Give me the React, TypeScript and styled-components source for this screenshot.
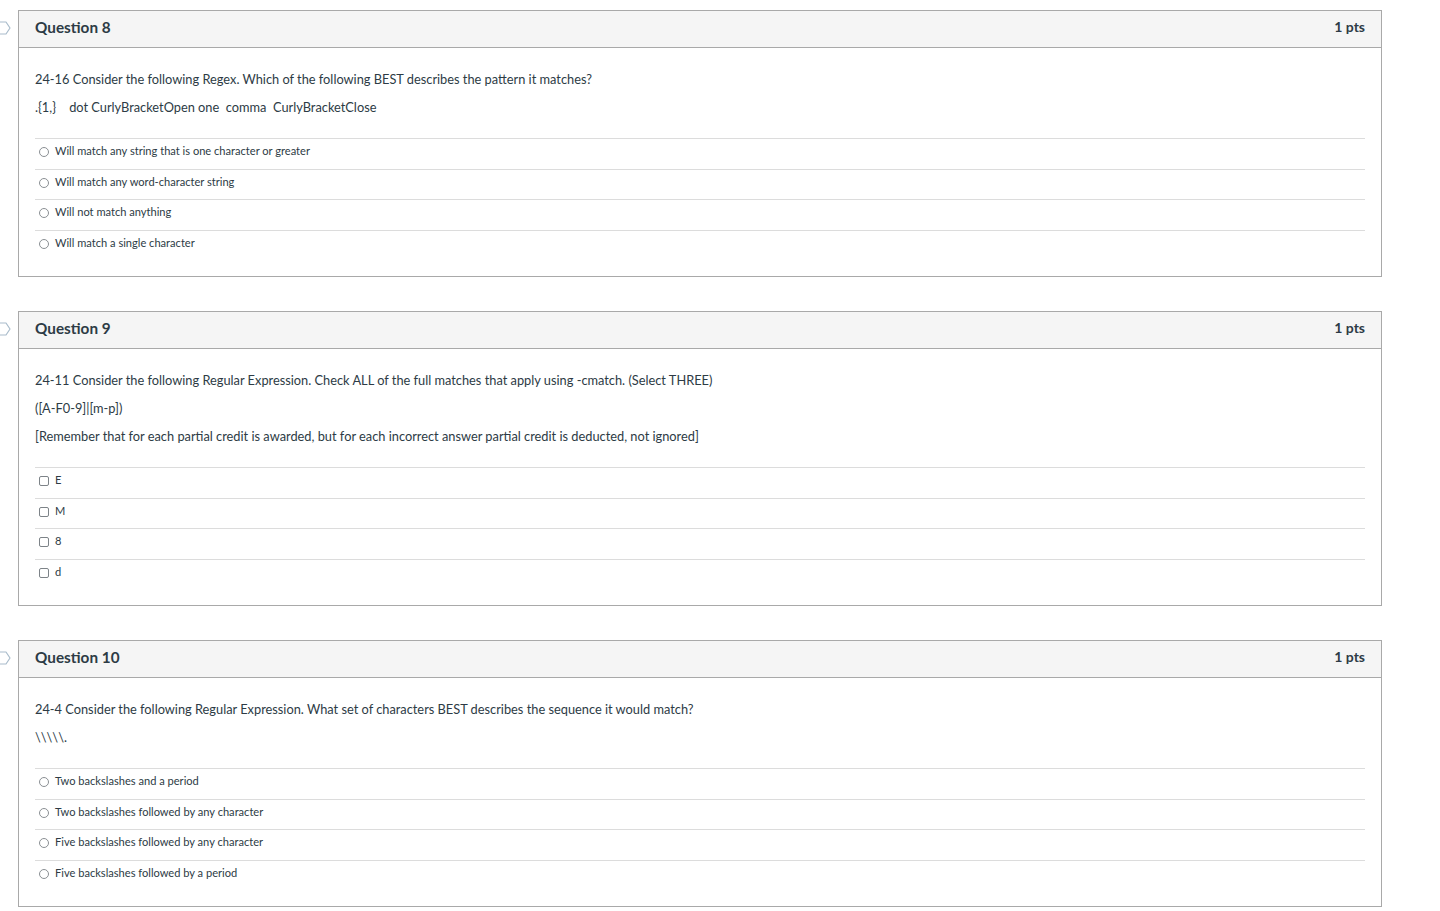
import React from 'react';
import styled, { createGlobalStyle } from 'styled-components';

const GlobalStyle = createGlobalStyle`
  body {
    margin: 0;
    background: #ffffff;
    font-family: Lato, "Open Sans", Arial, sans-serif;
    color: #2d3b45;
  }
`;

const Page = styled.div`
  padding-top: 10px;
  display: flex;
  flex-direction: column;
  gap: 34px;
  width: 1440px;
`;

const QuestionRow = styled.div`
  display: flex;
  align-items: flex-start;
`;

const FlagColumn = styled.div`
  width: 18px;
  padding-top: 11px;
  display: flex;
`;

const QuestionBox = styled.div`
  width: 1364px;
  box-sizing: border-box;
  border: 1px solid #a9a9a9;
  background: #fff;
`;

const Header = styled.div`
  height: 37px;
  box-sizing: border-box;
  background: #f5f5f5;
  border-bottom: 1px solid #a9a9a9;
  display: flex;
  align-items: center;
  justify-content: space-between;
  padding: 0 16px 5px;
`;

const Title = styled.div`
  font-size: 15.3px;
  line-height: 18px;
  font-weight: 700;
  color: #2d3b45;
`;

const Points = styled.div`
  font-size: 14px;
  line-height: 18px;
  font-weight: 700;
  color: #2d3b45;
`;

const Body = styled.div`
  padding: 21px 16px 16px;
`;

const Text = styled.p`
  margin: 0 0 8px;
  font-size: 12.8px;
  line-height: 20px;
  color: #2d3b45;
  white-space: pre;
`;

const Answers = styled.div`
  margin-top: 21px;
`;

const AnswerRow = styled.div`
  height: 30.5px;
  box-sizing: border-box;
  border-top: 1px solid #dcdcdc;
  display: flex;
  align-items: flex-start;
  padding: 5px 0 0 4px;
  gap: 6px;
`;

const Radio = styled.span`
  width: 10px;
  height: 10px;
  margin-top: 3px;
  box-sizing: border-box;
  border: 1px solid #8a8f93;
  border-radius: 50%;
  flex: none;
`;

const Check = styled.span`
  width: 10px;
  height: 10px;
  margin-top: 3px;
  box-sizing: border-box;
  border: 1px solid #7d8388;
  border-radius: 2px;
  flex: none;
`;

const AnswerLabel = styled.span`
  font-size: 11.1px;
  line-height: 14px;
  color: #2d3b45;
`;

const Flag = () => (
  <svg width="11" height="14" viewBox="0 0 11 14">
    <path
      d="M-2 1 H6 L10 7 L6 13 H-2"
      fill="none"
      stroke="#a9bccb"
      strokeWidth="1.2"
      strokeLinejoin="round"
    />
  </svg>
);

type Question = {
  title: string;
  text: string[];
  kind: 'radio' | 'check';
  answers: string[];
};

const questions: Question[] = [
  {
    title: 'Question 8',
    text: [
      '24-16 Consider the following Regex. Which of the following BEST describes the pattern it matches?',
      '.{1,}    dot CurlyBracketOpen one  comma  CurlyBracketClose',
    ],
    kind: 'radio',
    answers: [
      'Will match any string that is one character or greater',
      'Will match any word-character string',
      'Will not match anything',
      'Will match a single character',
    ],
  },
  {
    title: 'Question 9',
    text: [
      '24-11 Consider the following Regular Expression. Check ALL of the full matches that apply using -cmatch. (Select THREE)',
      '([A-F0-9]|[m-p])',
      '[Remember that for each partial credit is awarded, but for each incorrect answer partial credit is deducted, not ignored]',
    ],
    kind: 'check',
    answers: ['E', 'M', '8', 'd'],
  },
  {
    title: 'Question 10',
    text: [
      '24-4 Consider the following Regular Expression. What set of characters BEST describes the sequence it would match?',
      '\\\\\\\\\\.',
    ],
    kind: 'radio',
    answers: [
      'Two backslashes and a period',
      'Two backslashes followed by any character',
      'Five backslashes followed by any character',
      'Five backslashes followed by a period',
    ],
  },
];

const App: React.FC = () => {
  return (
    <>
      <GlobalStyle />
      <Page>
        {questions.map((q) => (
          <QuestionRow key={q.title}>
            <FlagColumn>
              <Flag />
            </FlagColumn>
            <QuestionBox>
              <Header>
                <Title>{q.title}</Title>
                <Points>1 pts</Points>
              </Header>
              <Body>
                {q.text.map((t, i) => (
                  <Text key={i}>{t}</Text>
                ))}
                <Answers>
                  {q.answers.map((a) => (
                    <AnswerRow key={a}>
                      {q.kind === 'radio' ? <Radio /> : <Check />}
                      <AnswerLabel>{a}</AnswerLabel>
                    </AnswerRow>
                  ))}
                </Answers>
              </Body>
            </QuestionBox>
          </QuestionRow>
        ))}
      </Page>
    </>
  );
};

export default App;
